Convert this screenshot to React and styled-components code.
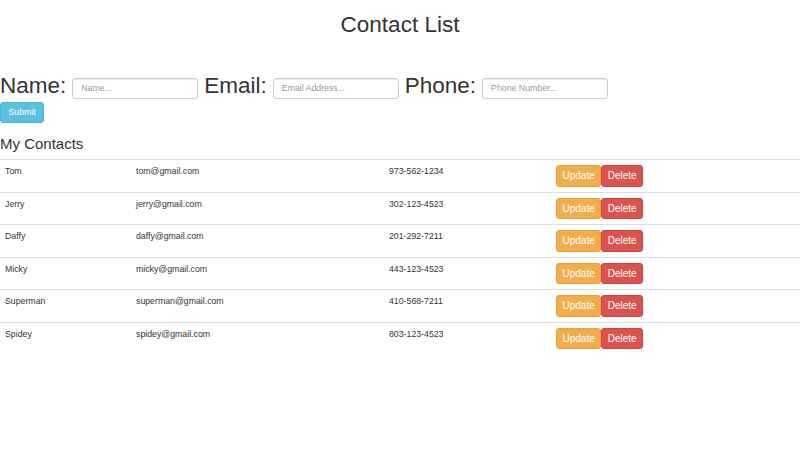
import styled, { createGlobalStyle } from "styled-components";

const GlobalStyle = createGlobalStyle`
  html, body {
    margin: 0;
    padding: 0;
    background: #ffffff;
  }
  body {
    font-family: "Liberation Sans", Arial, Helvetica, sans-serif;
    font-size: 8.75px;
    line-height: 1.42857;
    color: #333333;
  }
`;

const Page = styled.div`
  width: 800px;
`;

const Title = styled.h1`
  margin: 13px 0 0;
  font-size: 22.5px;
  font-weight: 400;
  line-height: 1.1;
  text-align: center;
`;

const Form = styled.form`
  margin-top: 36px;
`;

const FieldRow = styled.div`
  display: flex;
  align-items: center;
  gap: 6px;
`;

const Label = styled.label`
  font-size: 22.5px;
  line-height: 1.1;
`;

const Input = styled.input`
  box-sizing: border-box;
  width: 126px;
  height: 21px;
  margin: 4px 0 0 0;
  padding: 0 8px;
  border: 1px solid #cccccc;
  border-radius: 3px;
  box-shadow: inset 0 1px 1px rgba(0, 0, 0, 0.075);
  font-family: inherit;
  font-size: 8.75px;
  color: #555555;
  &::placeholder {
    color: #999999;
  }
`;

const Button = styled.button`
  box-sizing: border-box;
  height: 21.5px;
  padding: 0 ${(p) => p.pad || 7.5}px;
  border: 1px solid ${(p) => p.border};
  border-radius: 3px;
  background: ${(p) => p.bg};
  color: #ffffff;
  font-family: inherit;
  font-size: ${(p) => p.size || 8.75}px;
  line-height: 1;
  cursor: pointer;
`;

const SubmitButton = styled(Button)`
  display: block;
  margin-top: 3px;
`;

const SectionTitle = styled.h3`
  margin: 12.5px 0 7px;
  font-size: 15px;
  font-weight: 400;
  line-height: 1.1;
`;

const Table = styled.table`
  width: 800px;
  border-collapse: collapse;
  table-layout: fixed;
`;

const Cell = styled.td`
  box-sizing: border-box;
  width: ${(p) => p.w}px;
  padding: 5px;
  vertical-align: top;
  border-top: 1.5px solid #dddddd;
  line-height: 1.42857;
`;

const Actions = styled.div`
  display: flex;
`;

const contacts = [
  { name: "Tom", email: "tom@gmail.com", phone: "973-562-1234" },
  { name: "Jerry", email: "jerry@gmail.com", phone: "302-123-4523" },
  { name: "Daffy", email: "daffy@gmail.com", phone: "201-292-7211" },
  { name: "Micky", email: "micky@gmail.com", phone: "443-123-4523" },
  { name: "Superman", email: "superman@gmail.com", phone: "410-568-7211" },
  { name: "Spidey", email: "spidey@gmail.com", phone: "803-123-4523" },
];

export default function App() {
  return (
    <Page>
      <GlobalStyle />
      <Title>Contact List</Title>
      <Form onSubmit={(e) => e.preventDefault()}>
        <FieldRow>
          <Label>Name:</Label>
          <Input placeholder="Name..." />
          <Label>Email:</Label>
          <Input placeholder="Email Address..." />
          <Label>Phone:</Label>
          <Input placeholder="Phone Number..." />
        </FieldRow>
        <SubmitButton type="submit" bg="#5bc0de" border="#46b8da">
          Submit
        </SubmitButton>
      </Form>
      <SectionTitle>My Contacts</SectionTitle>
      <Table>
        <tbody>
          {contacts.map((c) => (
            <tr key={c.name}>
              <Cell w={131}>{c.name}</Cell>
              <Cell w={253}>{c.email}</Cell>
              <Cell w={167}>{c.phone}</Cell>
              <Cell w={249}>
                <Actions>
                  <Button bg="#f0ad4e" border="#eea236" size={10} pad={5.5}>
                    Update
                  </Button>
                  <Button bg="#d9534f" border="#d43f3a" size={10} pad={5.5}>
                    Delete
                  </Button>
                </Actions>
              </Cell>
            </tr>
          ))}
        </tbody>
      </Table>
    </Page>
  );
}
